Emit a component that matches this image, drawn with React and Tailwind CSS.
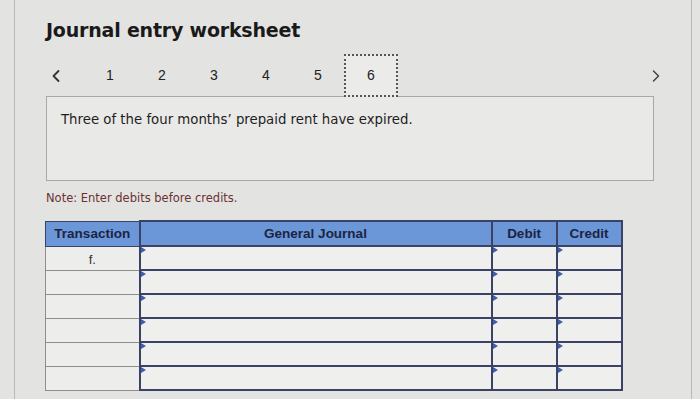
import { ChevronLeft, ChevronRight } from "lucide-react";

const steps = [1, 2, 3, 4, 5];
const rows = ["f.", "", "", "", "", ""];

const Marker = () => (
  <span className="absolute left-0 top-0 w-0 h-0 border-y-[3px] border-y-transparent border-l-[5px] border-l-[#3d5ea8]" />
);

const App = () => {
  return (
    <div className="w-[700px] h-[399px] bg-[#e3e3e1] overflow-hidden font-['DejaVu_Sans',sans-serif]">
      <div className="ml-[14px] w-[678px] h-full border-x border-[#b9b9b7] pl-[31px] pt-[18px]">
        {/* Title */}
        <h1 className="text-[19px] font-bold text-[#1a1a1a] leading-6 tracking-[-0.2px]">
          Journal entry worksheet
        </h1>

        {/* Step nav */}
        <div className="flex items-start h-[42px] mt-[12px] w-[620px] font-['Liberation_Sans',sans-serif] text-[14px] text-[#222]">
          <div className="w-[38px] h-[43px] flex items-center">
            <ChevronLeft className="w-5 h-5 text-[#333]" strokeWidth={2.2} />
          </div>
          {steps.map((s) => (
            <div key={s} className="w-[52px] h-[43px] flex items-center justify-center">
              {s}
            </div>
          ))}
          <div className="w-[54px] h-[43px] flex items-center justify-center border-2 border-dotted border-[#555] bg-[#ebebe9]">
            6
          </div>
          <div className="flex-1 h-[43px] flex items-center justify-end">
            <ChevronRight className="w-5 h-5 text-[#444]" strokeWidth={1.8} />
          </div>
        </div>

        {/* Description box */}
        <div className="w-[608px] h-[85px] border border-[#a8a8a6] bg-[#e9e9e7] px-[14px] pt-[13px] text-[13.3px] text-[#1e1e1e]">
          Three of the four months’ prepaid rent have expired.
        </div>

        {/* Note */}
        <p className="mt-[9px] text-[11.5px] text-[#6a3232]">
          Note: Enter debits before credits.
        </p>

        {/* Journal table */}
        <table className="mt-[13px] -ml-px border-collapse font-['Liberation_Sans',sans-serif] text-[13px]">
          <thead>
            <tr className="h-[25px] bg-[#6b96d8] text-[#1c2440] text-[13.5px]">
              <th className="w-[94px] border border-[#3b4266] font-bold">Transaction</th>
              <th className="w-[352px] border-2 border-[#3b4266] font-bold">General Journal</th>
              <th className="w-[65px] border-2 border-[#3b4266] font-bold">Debit</th>
              <th className="w-[65px] border-2 border-[#3b4266] font-bold">Credit</th>
            </tr>
          </thead>
          <tbody>
            {rows.map((r, i) => (
              <tr key={i} className="h-[24px]">
                <td className="border border-[#8e8e8e] bg-[#ededeb] text-center text-[#333] align-top pt-[3px]">
                  {r}
                </td>
                <td className="relative border-2 border-[#3b4266] bg-[#efefed]">
                  <Marker />
                </td>
                <td className="relative border-2 border-[#3b4266] bg-[#efefed]">
                  <Marker />
                </td>
                <td className="relative border-2 border-[#3b4266] bg-[#efefed]">
                  <Marker />
                </td>
              </tr>
            ))}
          </tbody>
        </table>
      </div>
    </div>
  );
};

export default App;
